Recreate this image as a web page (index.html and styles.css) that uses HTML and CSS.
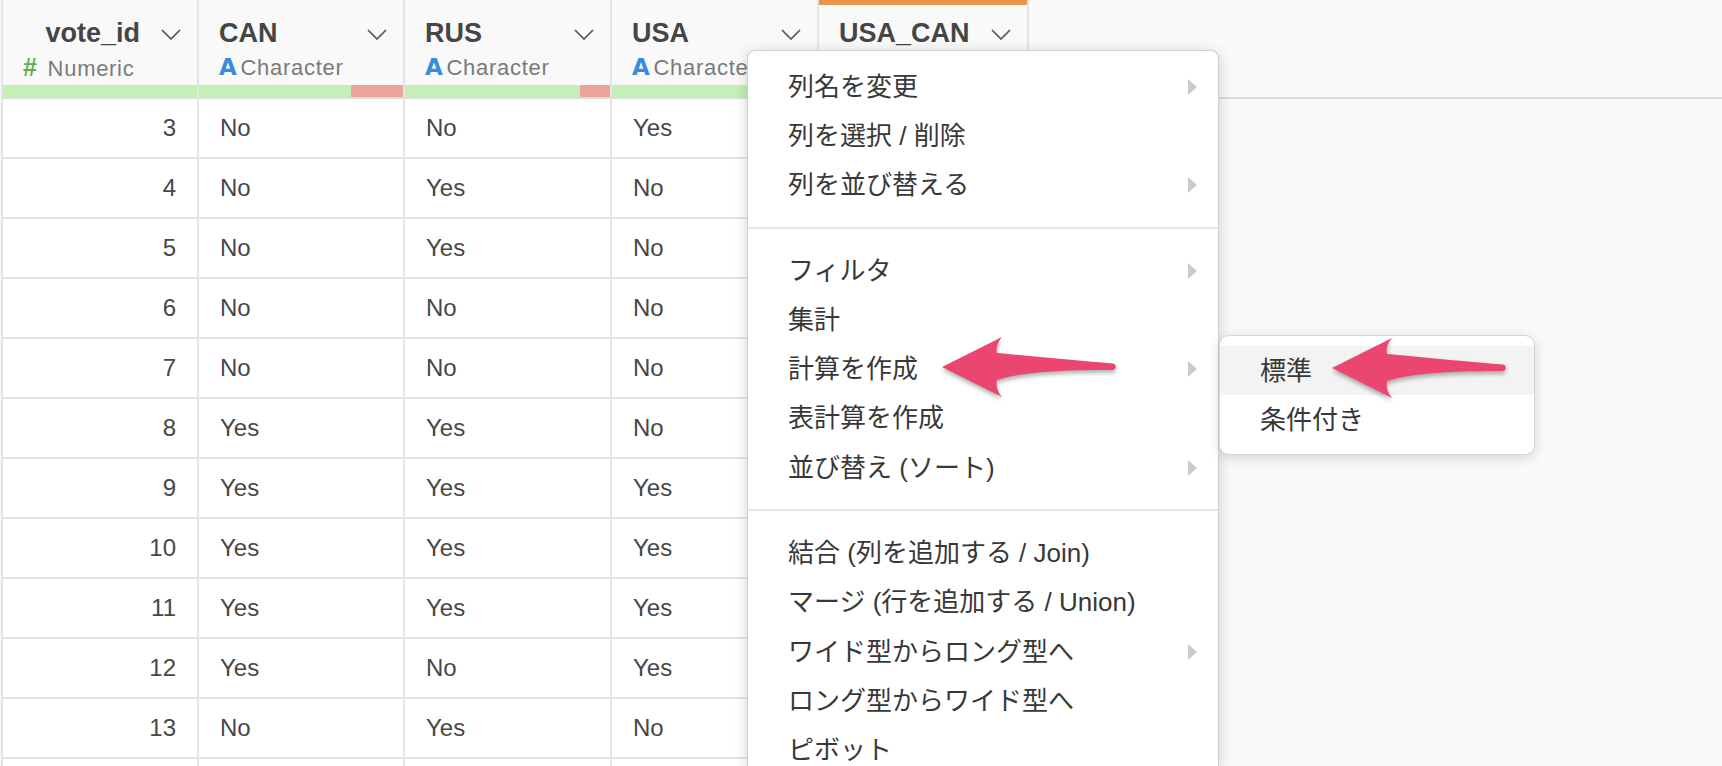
FILE: index.html
```html
<!DOCTYPE html>
<html lang="ja">
<head>
    <meta charset="UTF-8">
    <title>vote data</title>
    <link rel="stylesheet" href="styles.css">
</head>
<body>
    <div class="sheet">
        <div class="grid">
            <!-- header -->
            <div class="th num">
                <div class="th-top">
                    <span class="th-name">vote_id</span>
                    <svg class="chev" viewBox="0 0 20 11"><path d="M1 1l9 9 9-9"/></svg>
                </div>
                <div class="th-type"><span class="ico-num">#</span>Numeric</div>
                <div class="bar"></div>
            </div>
            <div class="th">
                <div class="th-top">
                    <span class="th-name">CAN</span>
                    <svg class="chev" viewBox="0 0 20 11"><path d="M1 1l9 9 9-9"/></svg>
                </div>
                <div class="th-type"><span class="ico-chr">A</span>Character</div>
                <div class="bar"><span class="miss" style="width: 25.5%"></span></div>
            </div>
            <div class="th">
                <div class="th-top">
                    <span class="th-name">RUS</span>
                    <svg class="chev" viewBox="0 0 20 11"><path d="M1 1l9 9 9-9"/></svg>
                </div>
                <div class="th-type"><span class="ico-chr">A</span>Character</div>
                <div class="bar"><span class="miss" style="width: 14.6%"></span></div>
            </div>
            <div class="th">
                <div class="th-top">
                    <span class="th-name">USA</span>
                    <svg class="chev" viewBox="0 0 20 11"><path d="M1 1l9 9 9-9"/></svg>
                </div>
                <div class="th-type"><span class="ico-chr">A</span>Character</div>
                <div class="bar"></div>
            </div>
            <div class="th active">
                <div class="th-top">
                    <span class="th-name">USA_CAN</span>
                    <svg class="chev" viewBox="0 0 20 11"><path d="M1 1l9 9 9-9"/></svg>
                </div>
                <div class="bar"></div>
            </div>

            <!-- rows (USA_CAN values sit under the menu) -->
            <div class="td num">3</div><div class="td">No</div><div class="td">No</div><div class="td">Yes</div><div class="td"></div>
            <div class="td num">4</div><div class="td">No</div><div class="td">Yes</div><div class="td">No</div><div class="td"></div>
            <div class="td num">5</div><div class="td">No</div><div class="td">Yes</div><div class="td">No</div><div class="td"></div>
            <div class="td num">6</div><div class="td">No</div><div class="td">No</div><div class="td">No</div><div class="td"></div>
            <div class="td num">7</div><div class="td">No</div><div class="td">No</div><div class="td">No</div><div class="td"></div>
            <div class="td num">8</div><div class="td">Yes</div><div class="td">Yes</div><div class="td">No</div><div class="td"></div>
            <div class="td num">9</div><div class="td">Yes</div><div class="td">Yes</div><div class="td">Yes</div><div class="td"></div>
            <div class="td num">10</div><div class="td">Yes</div><div class="td">Yes</div><div class="td">Yes</div><div class="td"></div>
            <div class="td num">11</div><div class="td">Yes</div><div class="td">Yes</div><div class="td">Yes</div><div class="td"></div>
            <div class="td num">12</div><div class="td">Yes</div><div class="td">No</div><div class="td">Yes</div><div class="td"></div>
            <div class="td num">13</div><div class="td">No</div><div class="td">Yes</div><div class="td">No</div><div class="td"></div>
            <div class="td cut"></div><div class="td cut"></div><div class="td cut"></div><div class="td cut"></div><div class="td cut"></div>
        </div>
        <div class="rest">
            <div class="rest-head"></div>
        </div>
    </div>

    <!-- column menu -->
    <div class="menu">
        <div class="menu-sec">
            <div class="mi sub">列名を変更</div>
            <div class="mi">列を選択 / 削除</div>
            <div class="mi sub">列を並び替える</div>
        </div>
        <div class="menu-sec">
            <div class="mi sub">フィルタ</div>
            <div class="mi">集計</div>
            <div class="mi sub">計算を作成</div>
            <div class="mi">表計算を作成</div>
            <div class="mi sub">並び替え (ソート)</div>
        </div>
        <div class="menu-sec">
            <div class="mi">結合 (列を追加する / Join)</div>
            <div class="mi">マージ (行を追加する / Union)</div>
            <div class="mi sub">ワイド型からロング型へ</div>
            <div class="mi">ロング型からワイド型へ</div>
            <div class="mi">ピボット</div>
        </div>
    </div>

    <div class="submenu">
        <div class="si on">標準</div>
        <div class="si">条件付き</div>
    </div>

    <!-- annotation arrows -->
    <svg class="arrow arrow-1" viewBox="0 0 200 90"><path d="M12 42L72 12Q65 20 67 28C100 31 150 36 183 38.5A3.3 3.3 0 0 1 183 45C140 45 95 46 67 55Q65 64 72 72Z"/></svg>
    <svg class="arrow arrow-2" viewBox="0 0 200 90"><path d="M12 42L72 12Q65 20 67 28C100 31 150 36 183 38.5A3.3 3.3 0 0 1 183 45C140 45 95 46 67 55Q65 64 72 72Z"/></svg>
</body>
</html>
```

FILE: styles.css
```css
body {
    margin: 0;
    height: 766px;
    overflow: hidden;
    background: #f9f9f9;
    font-family: "Liberation Sans", "Noto Sans CJK JP", sans-serif;
    color: #444;
}

.sheet {
    display: flex;
    align-items: flex-start;
}

.grid {
    display: grid;
    grid-template-columns: 196px 206px 207px 207px 210px;
    margin-left: 1px;
    border-left: 2px solid #e4e4e4;
    background: #fff;
}

.rest {
    flex: 1;
}

.rest-head {
    height: 97px;
    border-bottom: 2px solid #dedede;
}

/* header cells */
.th {
    position: relative;
    height: 99px;
    box-sizing: border-box;
    background: #f9f9f9;
    border-right: 2px solid #e4e4e4;
    border-bottom: 2px solid #dedede;
    padding: 16px 16px 0 20px;
    display: flex;
    flex-direction: column;
}

.th.active::before {
    content: "";
    position: absolute;
    left: 0;
    right: 0;
    top: 0;
    height: 5px;
    background: #e9944b;
}

.th-top {
    display: flex;
    align-items: center;
    justify-content: space-between;
    height: 34px;
}

.th.num .th-top {
    justify-content: flex-end;
    gap: 21px;
}

.th-name {
    font-size: 27px;
    font-weight: bold;
    line-height: 34px;
    color: #454545;
}

.chev {
    width: 20px;
    height: 11px;
    margin-top: 3px;
}

.chev path {
    fill: none;
    stroke: #555;
    stroke-width: 1.7;
}

.th-type {
    margin-top: 4px;
    height: 26px;
    line-height: 26px;
    font-size: 22px;
    letter-spacing: 0.7px;
    color: #7a7a7a;
    white-space: nowrap;
}

.ico-num {
    color: #5fae52;
    font-weight: bold;
    font-size: 25px;
    margin-right: 10px;
}

.ico-chr {
    color: #3a8bd9;
    font-weight: bold;
    font-size: 23px;
    font-family: "DejaVu Sans", sans-serif;
    margin-right: 3px;
}

.bar {
    position: absolute;
    left: 0;
    right: 0;
    bottom: 0;
    height: 12px;
    background: #c4efb7;
    display: flex;
    justify-content: flex-end;
}

.miss {
    background: #e9a49b;
}

/* data cells */
.td {
    height: 60px;
    box-sizing: border-box;
    border-right: 2px solid #e4e4e4;
    border-bottom: 2px solid #e4e4e4;
    padding: 0 20px 0 21px;
    font-size: 24px;
    display: flex;
    align-items: center;
    color: #474747;
}

.td.num {
    justify-content: flex-end;
    padding-right: 21px;
}

.td.cut {
    height: 7px;
    border-bottom: 0;
}

/* menu */
.menu {
    position: absolute;
    left: 747px;
    top: 50px;
    width: 472px;
    height: 716px;
    box-sizing: border-box;
    overflow: hidden;
    background: #fff;
    border: 1px solid #d2d2d2;
    border-bottom: 0;
    border-radius: 8px 8px 0 0;
    box-shadow: 0 3px 14px rgba(0, 0, 0, 0.18);
    color: #383838;
    font-size: 26px;
}

.menu-sec {
    padding: 17px 0;
}

.menu-sec:first-child {
    padding-top: 11px;
}

.menu-sec + .menu-sec {
    border-top: 2px solid #e6e6e6;
}

.mi {
    height: 49.3px;
    line-height: 30px;
    display: flex;
    align-items: center;
    justify-content: space-between;
    padding: 0 21px 0 40px;
    white-space: nowrap;
}

.mi.sub::after {
    content: "";
    border-left: 9px solid #cbcbcb;
    border-top: 8.5px solid transparent;
    border-bottom: 8.5px solid transparent;
}

.submenu {
    position: absolute;
    left: 1219px;
    top: 335px;
    width: 316px;
    height: 120px;
    box-sizing: border-box;
    padding: 10px 0;
    background: #fff;
    border: 1px solid #d6d6d6;
    border-radius: 10px;
    box-shadow: 0 3px 12px rgba(0, 0, 0, 0.15);
    color: #383838;
    font-size: 26px;
}

.si {
    height: 49px;
    line-height: 30px;
    display: flex;
    align-items: center;
    padding-left: 40px;
}

.si.on {
    background: #f3f3f3;
}

/* arrows */
.arrow {
    position: absolute;
    width: 200px;
    height: 90px;
    filter: drop-shadow(0 3px 2px rgba(0, 0, 0, 0.3));
}

.arrow path {
    fill: #ea4670;
}

.arrow-1 {
    left: 930px;
    top: 325px;
}

.arrow-2 {
    left: 1320px;
    top: 326px;
}
```
